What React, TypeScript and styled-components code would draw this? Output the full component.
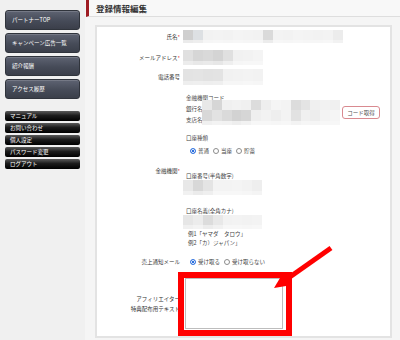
import styled, { createGlobalStyle } from "styled-components";

const GlobalStyle = createGlobalStyle`
  html, body {
    margin: 0;
    padding: 0;
  }
  body {
    width: 400px;
    height: 340px;
    overflow: hidden;
    font-family: "Noto Sans CJK JP", "Noto Sans", sans-serif;
    background: #f5f5f5;
  }
`;

const Page = styled.div`
  position: relative;
  display: flex;
  width: 400px;
  height: 340px;
  overflow: hidden;
`;

const Sidebar = styled.nav`
  width: 85px;
  flex-shrink: 0;
  box-sizing: border-box;
  padding: 10px 0 0 5px;
  background: #f0f0f0;
`;

const NavGroup = styled.div`
  display: flex;
  flex-direction: column;
  gap: 3px;
`;

const NavButton = styled.div`
  width: 75px;
  height: 20px;
  box-sizing: border-box;
  display: flex;
  align-items: center;
  padding-left: 6px;
  border: 1px solid #30343c;
  border-radius: 3px;
  background: linear-gradient(#5e6372, #464b58 55%, #3b3f4a);
  box-shadow: inset 0 1px 0 rgba(255, 255, 255, 0.15);
  color: #fff;
  font-size: 5.5px;
  white-space: nowrap;
`;

const SubGroup = styled.div`
  margin-top: 12px;
  display: flex;
  flex-direction: column;
  gap: 2px;
`;

const SubButton = styled.div`
  width: 75px;
  height: 10px;
  box-sizing: border-box;
  display: flex;
  align-items: center;
  padding-left: 5px;
  border-radius: 2px;
  background: linear-gradient(#5a5a5a, #1c1c1c 45%, #000);
  color: #fff;
  font-size: 5.5px;
  white-space: nowrap;
`;

const Main = styled.main`
  flex: 1;
  min-width: 0;
`;

const TitleBar = styled.div`
  height: 17px;
  margin-left: 1px;
  box-sizing: border-box;
  display: flex;
  align-items: center;
  border-left: 3px solid #9e1b22;
  border-bottom: 1px solid #dedede;
  background: #f8f8f8;
`;

const Title = styled.h1`
  margin: 0;
  padding-left: 7px;
  font-size: 8.5px;
  font-weight: 700;
  color: #333;
`;

const Panel = styled.section`
  margin: 8px 8px 0 10px;
  height: 313px;
  box-sizing: border-box;
  padding-top: 3px;
  background: #fff;
  border: 2px solid #e3e3e3;
`;

const Row = styled.div<{ $mt?: number }>`
  display: grid;
  grid-template-columns: 83px 1fr;
  column-gap: 3px;
  align-items: center;
  margin-top: ${(p) => p.$mt ?? 0}px;
`;

const Label = styled.div`
  text-align: right;
  font-size: 5.5px;
  line-height: 10px;
  color: #333;
  white-space: nowrap;
`;

const Req = styled.span`
  color: #e0151b;
`;

const Value = styled.div`
  display: flex;
  flex-direction: column;
  align-items: flex-start;
`;

const Small = styled.div<{ $mt?: number; $pl?: number; $lh?: number }>`
  margin-top: ${(p) => p.$mt ?? 0}px;
  padding-left: ${(p) => p.$pl ?? 3}px;
  font-size: 5.5px;
  line-height: ${(p) => p.$lh ?? 8}px;
  color: #444;
  white-space: nowrap;
`;

const BankLine = styled.div`
  display: flex;
  align-items: center;
  margin-top: -2px;
`;

const BankLabels = styled.div`
  width: 19px;
  height: 25px;
  box-sizing: border-box;
  padding: 4px 0 0 3px;
  font-size: 5.5px;
  line-height: 11px;
  color: #444;
  white-space: nowrap;
`;

const CodeButton = styled.div`
  margin-left: 2px;
  width: 38px;
  height: 13px;
  box-sizing: border-box;
  display: flex;
  align-items: center;
  justify-content: center;
  border: 1px solid #d98a90;
  border-radius: 3px;
  background: #fff;
  color: #555;
  font-size: 5.5px;
  white-space: nowrap;
`;

const Radios = styled.div<{ $mt?: number }>`
  display: flex;
  align-items: center;
  gap: 4px;
  height: 10px;
  margin-top: ${(p) => p.$mt ?? 0}px;
  padding-left: 7px;
`;

const Option = styled.span`
  display: flex;
  align-items: center;
  gap: 2px;
  font-size: 5.5px;
  color: #444;
  white-space: nowrap;
`;

const Dot = styled.span<{ $on?: boolean }>`
  width: 6px;
  height: 6px;
  box-sizing: border-box;
  border-radius: 50%;
  border: 1px solid ${(p) => (p.$on ? "#2b6fde" : "#8c8c8c")};
  background: ${(p) =>
    p.$on ? "radial-gradient(circle, #2b6fde 0 1.3px, #fff 1.6px 2px, #2b6fde 2.2px)" : "#fff"};
`;

const TextArea = styled.div`
  margin-left: 2px;
  width: 98px;
  height: 51px;
  box-sizing: border-box;
  border: 1px solid #bdbdbd;
  background: #fff;
`;

const BlurBox = styled.div<{ $w: number; $h: number; $n: number; $rows: string }>`
  display: grid;
  width: ${(p) => p.$w}px;
  height: ${(p) => p.$h}px;
  grid-template-columns: repeat(${(p) => p.$n}, 1fr);
  grid-template-rows: ${(p) => p.$rows};
`;

const Cell = styled.div<{ $c: string }>`
  background: ${(p) => p.$c};
`;

const Overlay = styled.svg`
  position: absolute;
  left: 0;
  top: 0;
  pointer-events: none;
`;

function Blur({ w, h, rows, template }: { w: number; h: number; rows: string[][]; template: string }) {
  return (
    <BlurBox $w={w} $h={h} $n={rows[0].length} $rows={template}>
      {rows.flat().map((c, i) => (
        <Cell key={i} $c={c} />
      ))}
    </BlurBox>
  );
}

const nav = ["パートナーTOP", "キャンペーン広告一覧", "紹介報酬", "アクセス履歴"];
const sub = ["マニュアル", "お問い合わせ", "個人設定", "パスワード変更", "ログアウト"];

const nameBlur = [
  ["#cfcfcf", "#dde0e3", "#f2f2f2", "#f3f3f3", "#f2f2f2", "#f4f4f4", "#f3f3f3", "#f2f2f2", "#dadada", "#f3f3f3", "#f2f2f2", "#f4f4f4", "#f3f3f3", "#f2f2f2", "#f3f3f3", "#ececec"],
  ["#ebebeb", "#eeeeee", "#f6f6f6", "#f7f7f7", "#f6f6f6", "#f7f7f7", "#f6f6f6", "#f6f6f6", "#ececec", "#f7f7f7", "#f6f6f6", "#f7f7f7", "#f6f6f6", "#f6f6f6", "#f7f7f7", "#f2f2f2"],
];
const mailBlur = [
  ["#e0e0e0", "#d6d6d6", "#d9d9d9", "#d4d4d4", "#e0e0e0", "#f1f1f1", "#f2f2f2", "#f4f4f4"],
  ["#ececec", "#e8e8e8", "#eaeaea", "#e7e7e7", "#efefef", "#f6f6f6", "#f7f7f7", "#f7f7f7"],
];
const telBlur = [
  ["#e3e3e3", "#e4e4e4", "#e2e2e2", "#e3e3e3", "#f1f1f1", "#f2f2f2", "#f3f3f3", "#f2f2f2"],
  ["#eeeeee", "#efefef", "#eeeeee", "#efefef", "#f6f6f6", "#f6f6f6", "#f7f7f7", "#f6f6f6"],
];
const bankBlur = [
  ["#e8e8e8", "#d6d6d6", "#f0f0f0", "#f2f2f2", "#f0f0f0", "#dcdcdc", "#eeeeee", "#f5f5f5", "#f3f3f3", "#dcdcdc", "#e4e4e4", "#f0f0f0", "#f2f2f2", "#f0f0f0"],
  ["#d8d8d8", "#e2e2e2", "#dadada", "#d2d2d2", "#d6d6d6", "#efefef", "#f2f2f2", "#eeeeee", "#f3f3f3", "#e2e2e2", "#f0f0f0", "#ededed", "#f3f3f3", "#f5f5f5"],
  ["#f0f0f0", "#f3f3f3", "#f2f2f2", "#eeeeee", "#f2f2f2", "#f7f7f7", "#f7f7f7", "#f6f6f6", "#f7f7f7", "#f3f3f3", "#f6f6f6", "#f5f5f5", "#f7f7f7", "#f7f7f7"],
];
const numBlur = [
  ["#e8e8e8", "#d8d8d8", "#e4e4e4", "#f3f3f3", "#f3f3f3", "#f4f4f4", "#f2f2f2", "#eeeeee"],
  ["#f1f1f1", "#ebebeb", "#efefef", "#f7f7f7", "#f7f7f7", "#f7f7f7", "#f6f6f6", "#f4f4f4"],
];
const kanaBlur = [
  ["#e6e6e6", "#ececec", "#dcdcdc", "#e8e8e8", "#f2f2f2", "#f3f3f3", "#f2f2f2", "#f3f3f3"],
  ["#f0f0f0", "#f3f3f3", "#ececec", "#f1f1f1", "#f7f7f7", "#f7f7f7", "#f6f6f6", "#f7f7f7"],
];

export default function App() {
  return (
    <Page>
      <GlobalStyle />
      <Sidebar>
        <NavGroup>
          {nav.map((n) => (
            <NavButton key={n}>{n}</NavButton>
          ))}
        </NavGroup>
        <SubGroup>
          {sub.map((n) => (
            <SubButton key={n}>{n}</SubButton>
          ))}
        </SubGroup>
      </Sidebar>

      <Main>
        <TitleBar>
          <Title>登録情報編集</Title>
        </TitleBar>
        <Panel>
          <Row>
            <Label>
              氏名<Req>*</Req>
            </Label>
            <Value>
              <Blur w={160} h={13} rows={nameBlur} template="1fr 3px" />
            </Value>
          </Row>
          <Row $mt={7}>
            <Label>
              メールアドレス<Req>*</Req>
            </Label>
            <Value>
              <Blur w={80} h={15} rows={mailBlur} template="1fr 4px" />
            </Value>
          </Row>
          <Row $mt={4}>
            <Label>電話番号</Label>
            <Value>
              <Blur w={80} h={16} rows={telBlur} template="1fr 4px" />
            </Value>
          </Row>
          <Row $mt={9}>
            <Label>
              金融機関<Req>*</Req>
            </Label>
            <Value>
              <Small>金融機関コード</Small>
              <BankLine>
                <BankLabels>
                  銀行名
                  <br />
                  支店名
                </BankLabels>
                <Blur w={138} h={25} rows={bankBlur} template="10px 11px 4px" />
                <CodeButton>コード取得</CodeButton>
              </BankLine>
              <Small $mt={9}>口座種類</Small>
              <Radios $mt={4}>
                <Option>
                  <Dot $on />
                  普通
                </Option>
                <Option>
                  <Dot />
                  当座
                </Option>
                <Option>
                  <Dot />
                  貯蓄
                </Option>
              </Radios>
              <Small $mt={16}>口座番号(半角数字)</Small>
              <Blur w={79} h={15} rows={numBlur} template="1fr 4px" />
              <Small $mt={12}>口座名義(全角カナ)</Small>
              <Blur w={79} h={14} rows={kanaBlur} template="1fr 4px" />
              <Small $mt={1} $pl={5} $lh={9}>
                例1「ヤマダ　タロウ」
              </Small>
              <Small $pl={5} $lh={9}>
                例2「カ）ジャパン」
              </Small>
            </Value>
          </Row>
          <Row $mt={9}>
            <Label>売上通知メール</Label>
            <Value>
              <Radios>
                <Option>
                  <Dot $on />
                  受け取る
                </Option>
                <Option>
                  <Dot />
                  受け取らない
                </Option>
              </Radios>
            </Value>
          </Row>
          <Row $mt={11}>
            <Label>
              アフィリエイター
              <br />
              特典配布用テキスト
            </Label>
            <Value>
              <TextArea />
            </Value>
          </Row>
        </Panel>
      </Main>

      <Overlay width="400" height="340" viewBox="0 0 400 340">
        <rect x="181" y="275" width="108" height="58" fill="none" stroke="#ff0000" strokeWidth="6" />
        <line x1="331" y1="248" x2="287" y2="279" stroke="#ff0000" strokeWidth="5" />
        <polygon points="274,288 283,273 292,285" fill="#ff0000" />
      </Overlay>
    </Page>
  );
}
